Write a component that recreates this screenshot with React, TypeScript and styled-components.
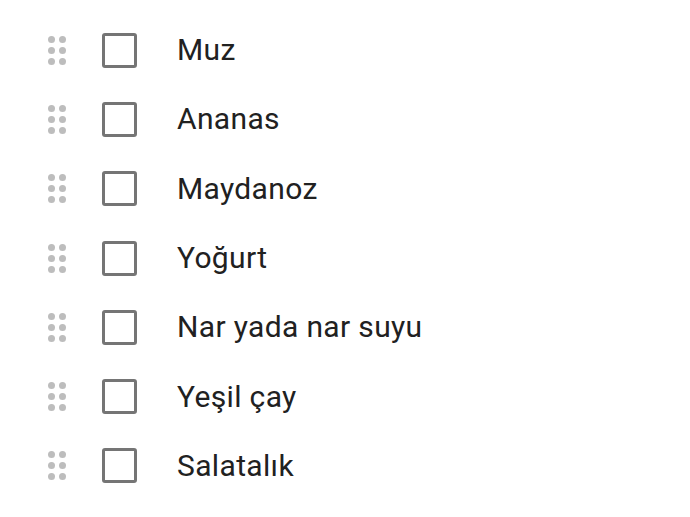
import React, { FC } from 'react'
import styled, { createGlobalStyle } from 'styled-components'

const GlobalStyle = createGlobalStyle`
    html, body {
        margin: 0;
        padding: 0;
        background: #ffffff;
        font-family: Roboto, "Noto Sans", sans-serif;
    }
`;

const List = styled.ul`
    list-style: none;
    margin: 0;
    padding: 15.5px 0 0 48px;
`;

const Row = styled.li`
    display: flex;
    align-items: center;
    height: 69.3px;
`;

const Handle = styled.span`
    display: grid;
    grid-template-columns: repeat(2, 7px);
    grid-auto-rows: 7px;
    gap: 4px;
    width: 18px;
    cursor: grab;
    i {
        display: block;
        border-radius: 50%;
        background: #bdbdbd;
    }
`;

const Box = styled.span`
    box-sizing: border-box;
    width: 35px;
    height: 35px;
    margin-left: 36px;
    border: 3px solid #757575;
    border-radius: 3px;
`;

const Label = styled.span`
    margin-left: 40px;
    font-size: 30px;
    line-height: 1;
    color: #212121;
    letter-spacing: 0.35px;
`;

const items = [
    'Muz',
    'Ananas',
    'Maydanoz',
    'Yoğurt',
    'Nar yada nar suyu',
    'Yeşil çay',
    'Salatalık',
]

const App: FC = () => {
    return (
        <>
            <GlobalStyle />
            <List>
                {items.map((item) => (
                    <Row key={item}>
                        <Handle>
                            <i /><i /><i /><i /><i /><i />
                        </Handle>
                        <Box />
                        <Label>{item}</Label>
                    </Row>
                ))}
            </List>
        </>
    )
}

export default App;
